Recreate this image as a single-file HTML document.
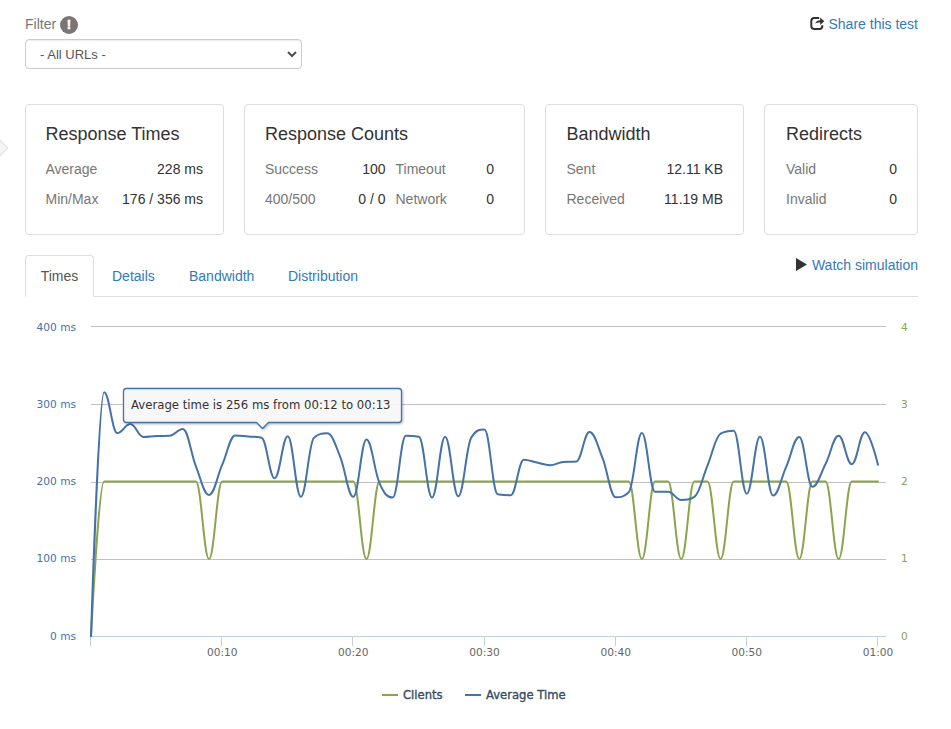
<!DOCTYPE html>
<html lang="en">
<head>
<meta charset="utf-8">
<title>Load test results</title>
<style>
*{box-sizing:border-box}
html,body{margin:0;padding:0;background:#fff}
body{width:951px;height:729px;position:relative;overflow:hidden;font-family:"Liberation Sans",Arial,Helvetica,sans-serif;font-size:14px;line-height:20px;color:#333}
a{color:#337ab7;text-decoration:none}
.abs{position:absolute}
.filter-label{left:25px;top:14px;color:#777;height:20px;white-space:nowrap}
.info{display:inline-block;width:18px;height:18px;border-radius:50%;background:#777;color:#fff;font-weight:bold;font-size:13px;line-height:18px;text-align:center;-webkit-text-stroke:0.6px #fff;vertical-align:top;margin-left:0px;margin-top:2px}
.select{left:25px;top:39px;width:277px;height:30px;border:1px solid #ccc;border-radius:4px;background:#fff;color:#555;font-size:13px;padding:4.5px 0 0 14px;box-shadow:inset 0 1px 1px rgba(0,0,0,.075)}
.select svg{position:absolute;right:3px;top:8px}
.share{right:33px;top:14px;white-space:nowrap}
.share svg,.watch svg{vertical-align:top;margin-right:5px}
.watch{right:33px;top:255px;white-space:nowrap}
.card{top:104px;height:131px;border:1px solid #ddd;border-radius:4px;background:#fff}
.card h4{position:absolute;left:20px;top:19px;margin:0;font-size:18px;line-height:20px;font-weight:normal;color:#333;white-space:nowrap}
.card .l{position:absolute;color:#777;white-space:nowrap}
.card .v{position:absolute;color:#333;white-space:nowrap;text-align:right}
.r1{top:54px}.r2{top:84px}
.tabs{left:25px;top:255px;width:893px;height:42px;border-bottom:1px solid #ddd}
.tab{position:absolute;top:0;height:42px;padding:11px 0 0 0;line-height:20px;color:#337ab7;white-space:nowrap}
.tab.active{left:0;width:69px;border:1px solid #ddd;border-bottom-color:#fff;border-radius:4px 4px 0 0;color:#555;background:#fff;text-align:center;padding-top:10px}
.diamond{left:-6px;top:142px;width:12px;height:12px;background:#f5f5f5;border:1px solid #e2e2e2;transform:rotate(45deg)}
svg text{font-family:"DejaVu Sans","Liberation Sans",sans-serif}
</style>
</head>
<body>
<div class="abs diamond"></div>

<div class="abs filter-label">Filter <span class="info">!</span></div>
<div class="abs select">- All URLs -
<svg width="12" height="12" viewBox="0 0 12 12"><path d="M2 4 L6 8 L10 4" fill="none" stroke="#505050" stroke-width="2"/></svg>
</div>

<div class="abs share"><a><svg width="15" height="16" viewBox="-1 -1 15 16" style="margin-top:2px;margin-left:-1px;margin-right:4px"><path d="M8.2 0.9 H3.3 Q0.3 0.9 0.3 3.9 V9 Q0.3 12 3.3 12 H8.3 Q11.3 12 11.3 9 V8.3" fill="none" stroke="#333" stroke-width="2"/><path d="M13.3 4.3 L9.2 0.6 V3.2 C7 3.2 5 4.2 4.3 6.4 C5.8 5.5 7.5 5.4 9.2 5.5 V8 Z" fill="#333"/></svg>Share this test</a></div>

<div class="abs card" style="left:25px;width:199px">
  <h4 style="left:19.5px">Response Times</h4>
  <span class="l r1" style="left:19.5px">Average</span><span class="v r1" style="right:20px">228 ms</span>
  <span class="l r2" style="left:19.5px">Min/Max</span><span class="v r2" style="right:20px">176 / 356 ms</span>
</div>
<div class="abs card" style="left:244px;width:281px">
  <h4>Response Counts</h4>
  <span class="l r1" style="left:20px">Success</span><span class="v r1" style="right:138.5px">100</span>
  <span class="l r1" style="left:150.5px">Timeout</span><span class="v r1" style="right:30px">0</span>
  <span class="l r2" style="left:20px">400/500</span><span class="v r2" style="right:138.5px">0 / 0</span>
  <span class="l r2" style="left:150.5px">Network</span><span class="v r2" style="right:30px">0</span>
</div>
<div class="abs card" style="left:545px;width:199px">
  <h4 style="left:20.5px">Bandwidth</h4>
  <span class="l r1" style="left:20.5px">Sent</span><span class="v r1" style="right:20px">12.11 KB</span>
  <span class="l r2" style="left:20.5px">Received</span><span class="v r2" style="right:20px">11.19 MB</span>
</div>
<div class="abs card" style="left:764px;width:154px">
  <h4 style="left:21px">Redirects</h4>
  <span class="l r1" style="left:21px">Valid</span><span class="v r1" style="right:20px">0</span>
  <span class="l r2" style="left:21px">Invalid</span><span class="v r2" style="right:20px">0</span>
</div>

<div class="abs tabs">
  <div class="tab active">Times</div>
  <div class="tab" style="left:87px">Details</div>
  <div class="tab" style="left:164px">Bandwidth</div>
  <div class="tab" style="left:263px">Distribution</div>
</div>
<div class="abs watch"><a><svg width="11" height="13" viewBox="0 0 11 13" style="margin-top:3px"><path d="M0 0 L11 6.5 L0 13 Z" fill="#333"/></svg>Watch simulation</a></div>

<svg class="abs" style="left:0;top:300px" width="951" height="429" viewBox="0 300 951 429">
  <defs>
    <filter id="sh" x="-10%" y="-30%" width="120%" height="170%"><feGaussianBlur in="SourceAlpha" stdDeviation="1.2"/><feOffset dx="1" dy="1"/><feComponentTransfer><feFuncA type="linear" slope="0.3"/></feComponentTransfer><feMerge><feMergeNode/><feMergeNode in="SourceGraphic"/></feMerge></filter>
  </defs>
  <!-- grid -->
  <g stroke="#c0c0c0" stroke-width="1" shape-rendering="crispEdges">
    <line x1="91" x2="886" y1="326.5" y2="326.5"/>
    <line x1="91" x2="886" y1="404.5" y2="404.5"/>
    <line x1="91" x2="886" y1="482.5" y2="482.5"/>
    <line x1="91" x2="886" y1="559.5" y2="559.5"/>
  </g>
  <g stroke="#c0d0e0" stroke-width="1" shape-rendering="crispEdges">
    <line x1="91" x2="886" y1="636.5" y2="636.5"/>
    <line x1="90.5" x2="90.5" y1="636" y2="646"/>
    <line x1="221.5" x2="221.5" y1="636" y2="646"/>
    <line x1="352.5" x2="352.5" y1="636" y2="646"/>
    <line x1="484.5" x2="484.5" y1="636" y2="646"/>
    <line x1="615.5" x2="615.5" y1="636" y2="646"/>
    <line x1="746.5" x2="746.5" y1="636" y2="646"/>
    <line x1="877.5" x2="877.5" y1="636" y2="646"/>
  </g>
  <!-- series -->
  <clipPath id="plot"><rect x="90" y="320" width="797" height="317"/></clipPath>
  <g clip-path="url(#plot)">
  <path d="M91.00 636.50 C91.00 636.50 98.87 481.50 104.12 481.50 C109.36 481.50 111.99 481.50 117.23 481.50 C122.48 481.50 125.10 481.50 130.35 481.50 C135.60 481.50 138.22 481.50 143.47 481.50 C148.71 481.50 151.34 481.50 156.58 481.50 C161.83 481.50 164.45 481.50 169.70 481.50 C174.95 481.50 177.57 481.50 182.82 481.50 C188.06 481.50 190.69 481.50 195.93 481.50 C201.18 481.50 203.80 559.00 209.05 559.00 C214.30 559.00 216.92 481.50 222.17 481.50 C227.41 481.50 230.04 481.50 235.28 481.50 C240.53 481.50 243.15 481.50 248.40 481.50 C253.65 481.50 256.27 481.50 261.52 481.50 C266.76 481.50 269.39 481.50 274.63 481.50 C279.88 481.50 282.50 481.50 287.75 481.50 C293.00 481.50 295.62 481.50 300.87 481.50 C306.11 481.50 308.74 481.50 313.98 481.50 C319.23 481.50 321.85 481.50 327.10 481.50 C332.35 481.50 334.97 481.50 340.22 481.50 C345.46 481.50 348.09 481.50 353.33 481.50 C358.58 481.50 361.20 559.00 366.45 559.00 C371.70 559.00 374.32 481.50 379.57 481.50 C384.81 481.50 387.44 481.50 392.68 481.50 C397.93 481.50 400.55 481.50 405.80 481.50 C411.05 481.50 413.67 481.50 418.92 481.50 C424.16 481.50 426.79 481.50 432.03 481.50 C437.28 481.50 439.90 481.50 445.15 481.50 C450.40 481.50 453.02 481.50 458.27 481.50 C463.51 481.50 466.14 481.50 471.38 481.50 C476.63 481.50 479.25 481.50 484.50 481.50 C489.75 481.50 492.37 481.50 497.62 481.50 C502.86 481.50 505.49 481.50 510.73 481.50 C515.98 481.50 518.60 481.50 523.85 481.50 C529.10 481.50 531.72 481.50 536.97 481.50 C542.21 481.50 544.84 481.50 550.08 481.50 C555.33 481.50 557.95 481.50 563.20 481.50 C568.45 481.50 571.07 481.50 576.32 481.50 C581.56 481.50 584.19 481.50 589.43 481.50 C594.68 481.50 597.30 481.50 602.55 481.50 C607.80 481.50 610.42 481.50 615.67 481.50 C620.91 481.50 623.54 481.50 628.78 481.50 C634.03 481.50 636.65 559.00 641.90 559.00 C647.15 559.00 649.77 481.50 655.02 481.50 C660.26 481.50 662.89 481.50 668.13 481.50 C673.38 481.50 676.00 559.00 681.25 559.00 C686.50 559.00 689.12 481.50 694.37 481.50 C699.61 481.50 702.24 481.50 707.48 481.50 C712.73 481.50 715.35 559.00 720.60 559.00 C725.85 559.00 728.47 481.50 733.72 481.50 C738.96 481.50 741.59 481.50 746.84 481.50 C752.08 481.50 754.71 481.50 759.95 481.50 C765.20 481.50 767.82 481.50 773.07 481.50 C778.32 481.50 780.94 481.50 786.19 481.50 C791.43 481.50 794.06 559.00 799.30 559.00 C804.55 559.00 807.17 481.50 812.42 481.50 C817.67 481.50 820.29 481.50 825.54 481.50 C830.78 481.50 833.41 559.00 838.65 559.00 C843.90 559.00 846.52 481.50 851.77 481.50 C857.02 481.50 859.64 481.50 864.89 481.50 C870.13 481.50 878.00 481.50 878.00 481.50" fill="none" stroke="#89a54e" stroke-width="2" stroke-linejoin="round" stroke-linecap="round"/>
  <path d="M91.00 636.50 C91.00 636.50 98.87 392.20 104.12 392.20 C109.36 392.20 111.99 433.10 117.23 433.10 C122.48 433.10 125.10 424.10 130.35 424.10 C135.60 424.10 138.22 437.00 143.47 437.00 C148.71 437.00 151.34 436.20 156.58 436.00 C161.83 435.80 164.45 436.00 169.70 435.80 C174.95 435.60 177.57 428.90 182.82 428.90 C188.06 428.90 190.69 453.10 195.93 466.30 C201.18 479.50 203.80 494.90 209.05 494.90 C214.30 494.90 216.92 476.80 222.17 464.90 C227.41 453.00 230.04 435.40 235.28 435.40 C240.53 435.40 243.15 436.04 248.40 436.50 C253.65 436.96 256.27 436.50 261.52 437.70 C266.76 438.90 269.39 478.30 274.63 478.30 C279.88 478.30 282.50 436.20 287.75 436.20 C293.00 436.20 295.62 496.80 300.87 496.80 C306.11 496.80 308.74 442.10 313.98 437.70 C319.23 433.30 321.85 433.30 327.10 433.30 C332.35 433.30 334.97 444.10 340.22 456.80 C345.46 469.50 348.09 496.80 353.33 496.80 C358.58 496.80 361.20 439.60 366.45 439.60 C371.70 439.60 374.32 471.70 379.57 483.30 C384.81 494.90 387.44 497.60 392.68 497.60 C397.93 497.60 400.55 435.70 405.80 435.70 C411.05 435.70 413.67 435.70 418.92 436.70 C424.16 437.70 426.79 497.60 432.03 497.60 C437.28 497.60 439.90 436.70 445.15 436.70 C450.40 436.70 453.02 496.30 458.27 496.30 C463.51 496.30 466.14 445.30 471.38 437.40 C476.63 429.50 479.25 429.50 484.50 429.50 C489.75 429.50 492.37 493.10 497.62 494.20 C502.86 495.30 505.49 495.30 510.73 495.30 C515.98 495.30 518.60 459.80 523.85 459.80 C529.10 459.80 531.72 461.52 536.97 462.60 C542.21 463.68 544.84 465.20 550.08 465.20 C555.33 465.20 557.95 462.30 563.20 461.90 C568.45 461.50 571.07 461.90 576.32 461.50 C581.56 461.10 584.19 432.00 589.43 432.00 C594.68 432.00 597.30 445.06 602.55 458.10 C607.80 471.14 610.42 497.20 615.67 497.20 C620.91 497.20 623.54 497.20 628.78 492.30 C634.03 487.40 636.65 432.90 641.90 432.90 C647.15 432.90 649.77 491.80 655.02 491.80 C660.26 491.80 662.89 491.80 668.13 491.80 C673.38 491.80 676.00 500.00 681.25 500.00 C686.50 500.00 689.12 500.00 694.37 496.80 C699.61 493.60 702.24 478.24 707.48 465.60 C712.73 452.96 715.35 436.40 720.60 433.60 C725.85 430.80 728.47 430.80 733.72 430.80 C738.96 430.80 741.59 493.80 746.84 493.80 C752.08 493.80 754.71 436.70 759.95 436.70 C765.20 436.70 767.82 495.50 773.07 495.50 C778.32 495.50 780.94 478.50 786.19 466.80 C791.43 455.10 794.06 437.00 799.30 437.00 C804.55 437.00 807.17 486.70 812.42 486.70 C817.67 486.70 820.29 474.18 825.54 464.00 C830.78 453.82 833.41 435.80 838.65 435.80 C843.90 435.80 846.52 464.20 851.77 464.20 C857.02 464.20 859.64 432.20 864.89 432.20 C870.13 432.20 878.00 464.80 878.00 464.80" fill="none" stroke="#4572a7" stroke-width="2" stroke-linejoin="round" stroke-linecap="round"/>
  </g>
  <!-- axis labels -->
  <g font-size="10.6" fill="#4572a7" text-anchor="end">
    <text x="76" y="331">400 ms</text>
    <text x="76" y="408">300 ms</text>
    <text x="76" y="485">200 ms</text>
    <text x="76" y="562">100 ms</text>
    <text x="76" y="640">0 ms</text>
  </g>
  <g font-size="10.6" fill="#89a54e" text-anchor="start">
    <text x="901" y="331">4</text>
    <text x="901" y="408">3</text>
    <text x="901" y="485">2</text>
    <text x="901" y="562">1</text>
    <text x="901" y="640">0</text>
  </g>
  <g font-size="10.6" fill="#666" text-anchor="middle">
    <text x="222.2" y="656">00:10</text>
    <text x="353.3" y="656">00:20</text>
    <text x="484.5" y="656">00:30</text>
    <text x="615.7" y="656">00:40</text>
    <text x="746.8" y="656">00:50</text>
    <text x="878" y="656">01:00</text>
  </g>
  <!-- tooltip -->
  <g filter="url(#sh)">
    <path d="M126.5 388.500 H398.5 Q401.5 388.5 401.5 391.5 V419.5 Q401.5 422.5 398.5 422.5 H268.500 L262.5 428.5 L256.5 422.5 H126.5 Q123.5 422.5 123.5 419.5 V391.5 Q123.5 388.5 126.5 388.5 Z" fill="#f9f9fb" fill-opacity="0.9" stroke="#4572a7" stroke-width="1.3"/>
  </g>
  <text x="131" y="409" font-size="11.7" fill="#333">Average time is 256 ms from 00:12 to 00:13</text>
  <!-- legend -->
  <path d="M382 695 H398" stroke="#89a54e" stroke-width="2"/>
  <text x="403" y="699" font-size="11.6" fill="#364d63" stroke="#364d63" stroke-width="0.35">Clients</text>
  <path d="M465 695 H481" stroke="#4572a7" stroke-width="2"/>
  <text x="486" y="699" font-size="11.6" fill="#364d63" stroke="#364d63" stroke-width="0.35">Average Time</text>
</svg>
</body>
</html>
